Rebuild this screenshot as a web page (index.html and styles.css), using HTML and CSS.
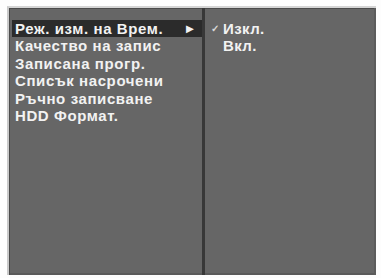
FILE: index.html
```html
<!DOCTYPE html>
<html lang="bg">
<head>
    <meta charset="UTF-8">
    <title>Запис</title>
    <link rel="stylesheet" href="styles.css">
</head>
<body>
    <div class="osd">
        <ul class="menu">
            <li class="item active">Реж. изм. на Врем.<span class="arrow">&#9658;</span></li>
            <li class="item">Качество на запис</li>
            <li class="item">Записана прогр.</li>
            <li class="item">Списък насрочени</li>
            <li class="item">Ръчно записване</li>
            <li class="item">HDD Формат.</li>
        </ul>
        <div class="divider"></div>
        <ul class="submenu">
            <li class="opt"><span class="check">&#10003;</span>Изкл.</li>
            <li class="opt">Вкл.</li>
        </ul>
    </div>
</body>
</html>
```

FILE: styles.css
```css
body {
    margin: 0;
    background-color: #fdfdfd;
    font-family: "Liberation Sans", Arial, sans-serif;
}

.osd {
    display: flex;
    margin: 6px 5px 3px 7px;
    height: 267px;
    background-color: #666666;
    border-left: 2px solid #c9c9c9;
    border-top: 2px solid #d4d4d4;
    box-shadow: inset 1px 1px 0 #4a4a4a, inset -2px -2px 0 #5a5a5a;
}

ul {
    list-style: none;
    margin: 0;
    padding: 0;
}

.menu {
    width: 190px;
    padding: 12px 0 0 3px;
}

.item {
    position: relative;
    height: 17.4px;
    line-height: 18px;
    padding-left: 3px;
    font-size: 15px;
    font-weight: bold;
    color: #f2f2f2;
    letter-spacing: 0.6px;
}

.item.active {
    background-color: #2b2b2b;
}

.arrow {
    position: absolute;
    right: 5px;
    top: 0;
    font-size: 13px;
}

.divider {
    width: 3px;
    background-color: #383838;
}

.submenu {
    flex: 1;
    padding: 12px 0 0 6px;
    border-right: 2px solid #5c5c5c;
}

.opt {
    height: 17.4px;
    line-height: 18px;
    padding-left: 12px;
    position: relative;
    font-size: 15px;
    font-weight: bold;
    color: #f2f2f2;
    letter-spacing: 0.4px;
}

.check {
    position: absolute;
    left: 0;
    top: 0;
    font-size: 10px;
    color: #d8d8d8;
}
```
